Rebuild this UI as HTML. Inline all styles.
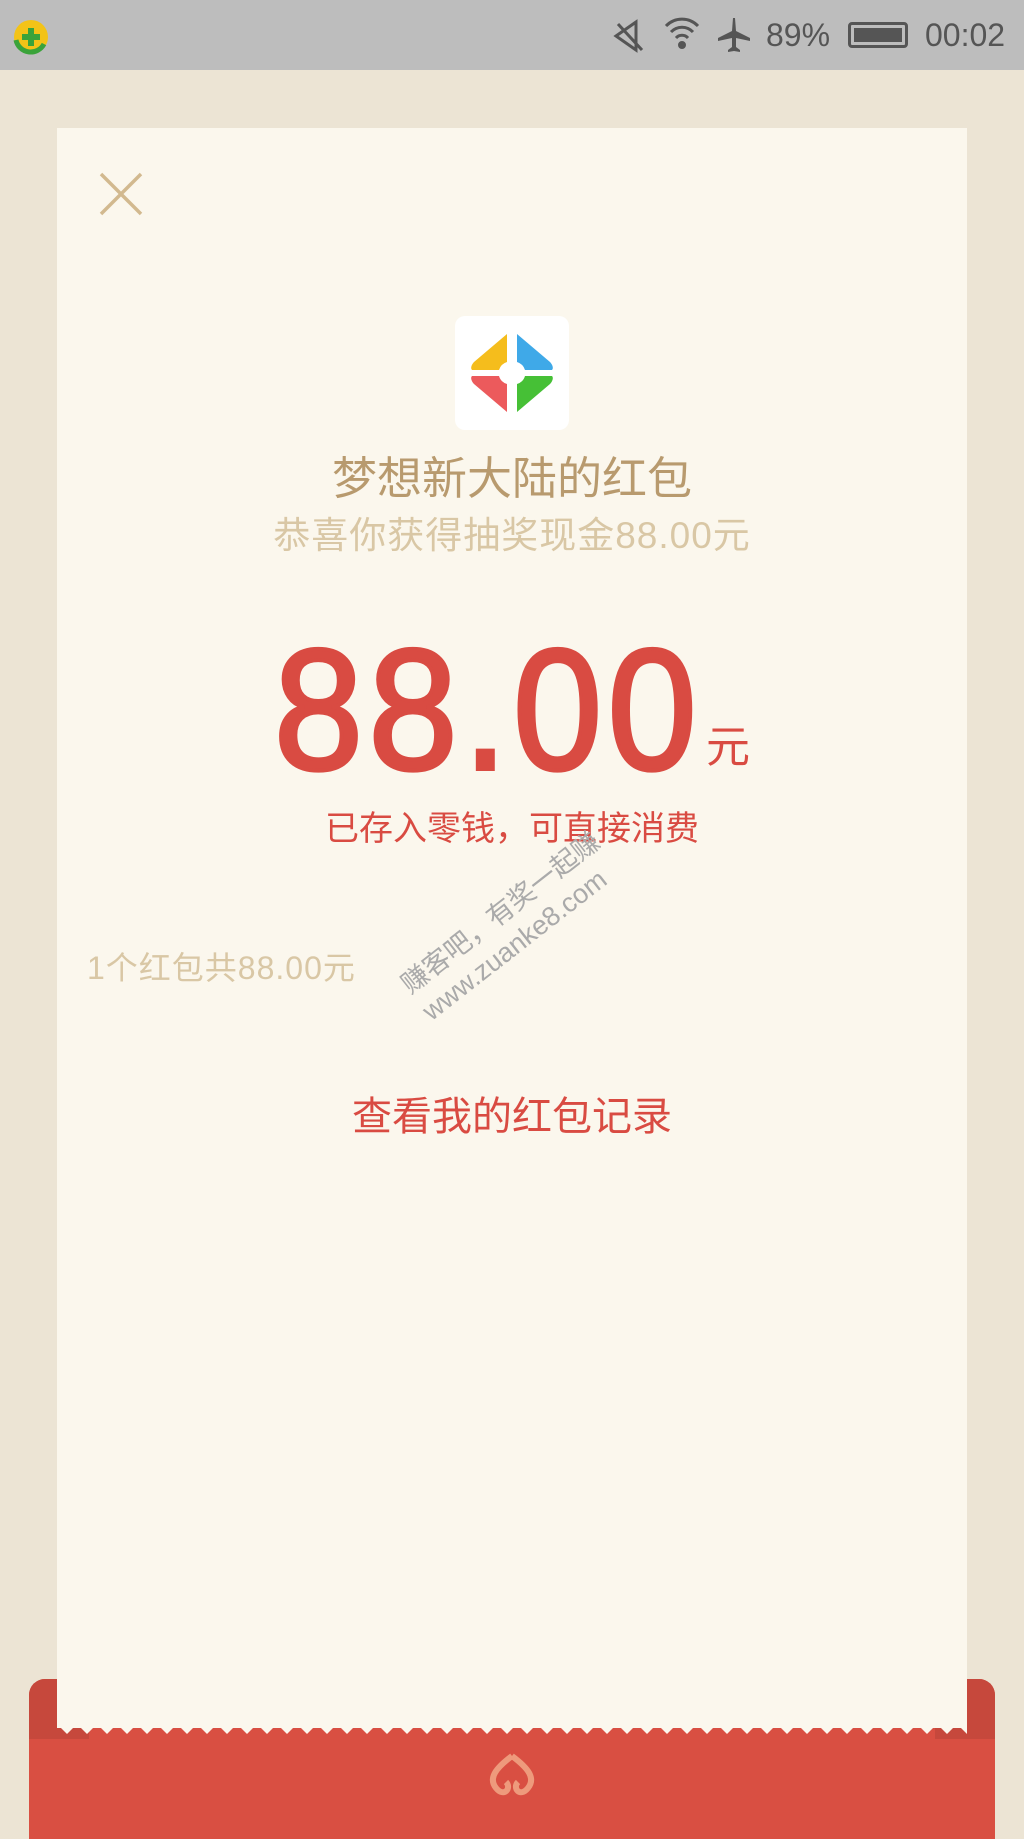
<!DOCTYPE html>
<html><head><meta charset="utf-8"><style>
*{margin:0;padding:0;box-sizing:border-box}
body{width:1024px;height:1820px;background:#ece4d4;position:relative;overflow:hidden;font-family:"Liberation Sans","Noto Sans CJK SC",sans-serif}
.abs{position:absolute}
.status{left:0;top:0;width:1024px;height:70px;background:#bdbdbd}
.red{left:29px;top:1679px;width:966px;height:160px;background:#d94f42;border-radius:16px 16px 0 0}
.redside{top:1679px;width:60px;height:60px;background:#c6483c}
.card{left:57px;top:128px;width:910px;height:1600px;background:#fbf7ed}
.c{text-align:center;white-space:nowrap}
</style></head><body>
<div class="abs status"></div>
<svg class="abs" style="left:12px;top:18px" width="38" height="38" viewBox="0 0 38 38"><circle cx="19" cy="19" r="17" fill="#f3c317"/><path d="M4 22a15 15 0 0 0 28 4" stroke="#3aa33a" stroke-width="5" fill="none"/><path d="M19 10v18M10 19h18" stroke="#3aa33a" stroke-width="6"/></svg>
<svg class="abs" style="left:612px;top:18px" width="36" height="36" viewBox="0 0 36 36" fill="none" stroke="#555" stroke-width="3"><path d="M4 18l20-14v28z"/><path d="M6 6l24 26"/></svg>
<svg class="abs" style="left:662px;top:16px" width="40" height="36" viewBox="0 0 40 36" fill="none" stroke="#555" stroke-width="3"><path d="M4 10a22 22 0 0 1 32 0M9 16a15 15 0 0 1 22 0M14 22a8 8 0 0 1 12 0"/><circle cx="20" cy="29" r="2.5" fill="#555"/></svg>
<svg class="abs" style="left:716px;top:16px" width="36" height="38" viewBox="0 0 36 38" fill="#555"><path d="M17 2h2l1 13 14 7v3l-14-3v9l4 3v2l-6-1-6 1v-2l4-3v-9l-14 3v-3l14-7z"/></svg>
<div class="abs" style="left:766px;top:17px;font-size:32px;color:#555">89%</div>
<div class="abs" style="left:848px;top:22px;width:60px;height:26px;border:3px solid #555;border-radius:4px"><div style="margin:3px;height:14px;background:#555;width:48px"></div></div>
<div class="abs" style="left:925px;top:17px;font-size:32px;color:#555">00:02</div>

<div class="abs red"></div>
<div class="abs redside" style="left:29px;border-radius:16px 0 0 0"></div>
<div class="abs redside" style="left:935px;border-radius:0 16px 0 0"></div>
<div class="abs card"></div>
<svg class="abs" style="left:57px;top:1724px" width="910" height="14"><defs><pattern id="z" width="20" height="14" patternUnits="userSpaceOnUse"><path d="M0 0L10 10L20 0Z" fill="#fbf7ed"/></pattern></defs><rect width="910" height="14" fill="url(#z)"/></svg>
<svg class="abs" style="left:486px;top:1752px" width="52" height="44" viewBox="0 0 52 44" fill="none" stroke="#ee9a7c" stroke-width="6"><path d="M26 4C10 16 2 26 10 36s16 0 10-6M26 4c16 12 24 22 16 32s-16 0-10-6"/></svg>

<svg class="abs" style="left:99px;top:172px" width="44" height="44" stroke="#d2b98f" stroke-width="3.5"><path d="M2 2L42 42M42 2L2 42"/></svg>
<div class="abs" style="left:455px;top:316px;width:114px;height:114px;background:#fff;border-radius:10px"></div>
<svg class="abs" style="left:455px;top:316px" width="114" height="114" viewBox="0 0 114 114">
<path d="M52 18L52 46 A12 12 0 0 0 44 54L17 54C15 52 17 48 19 46z" fill="#f5bd1c"/>
<path d="M62 18L62 46 A12 12 0 0 1 70 54L97 54C99 52 97 48 95 46z" fill="#3fa9e8"/>
<path d="M52 96L52 68 A12 12 0 0 1 44 60L17 60C15 62 17 66 19 68z" fill="#ec5a5c"/>
<path d="M62 96L62 68 A12 12 0 0 0 70 60L97 60C99 62 97 66 95 68z" fill="#46c036"/>
</svg>
<div class="abs c" style="left:0;width:1024px;top:442px;font-size:45px;color:#b89a6e">梦想新大陆的红包</div>
<div class="abs c" style="left:0;width:1024px;top:505px;font-size:37px;letter-spacing:1px;color:#d9c7a5">恭喜你获得抽奖现金88.00元</div>
<div class="abs" style="left:274px;top:624px;font-size:172px;color:#d94b42;-webkit-text-stroke:4px #d94b42;transform:scaleX(0.93);transform-origin:left top;line-height:1;letter-spacing:6px">88.00</div>
<div class="abs" style="left:706px;top:726px;font-size:44px;color:#d94b42;line-height:1">元</div>
<div class="abs c" style="left:0;width:1024px;top:801px;font-size:34px;color:#d94b42">已存入零钱，可直接消费</div>
<div class="abs" style="left:87px;top:943px;font-size:32px;letter-spacing:1px;color:#d9c7a5">1个红包共88.00元</div>
<div class="abs" style="left:395px;top:975px;font-size:27px;color:#aaa;transform:rotate(-38deg);transform-origin:left top;white-space:nowrap;line-height:1.25">赚客吧，有奖一起赚<br>www.zuanke8.com</div>
<div class="abs c" style="left:0;width:1024px;top:1084px;font-size:40px;color:#d94b42">查看我的红包记录</div>
</body></html>
